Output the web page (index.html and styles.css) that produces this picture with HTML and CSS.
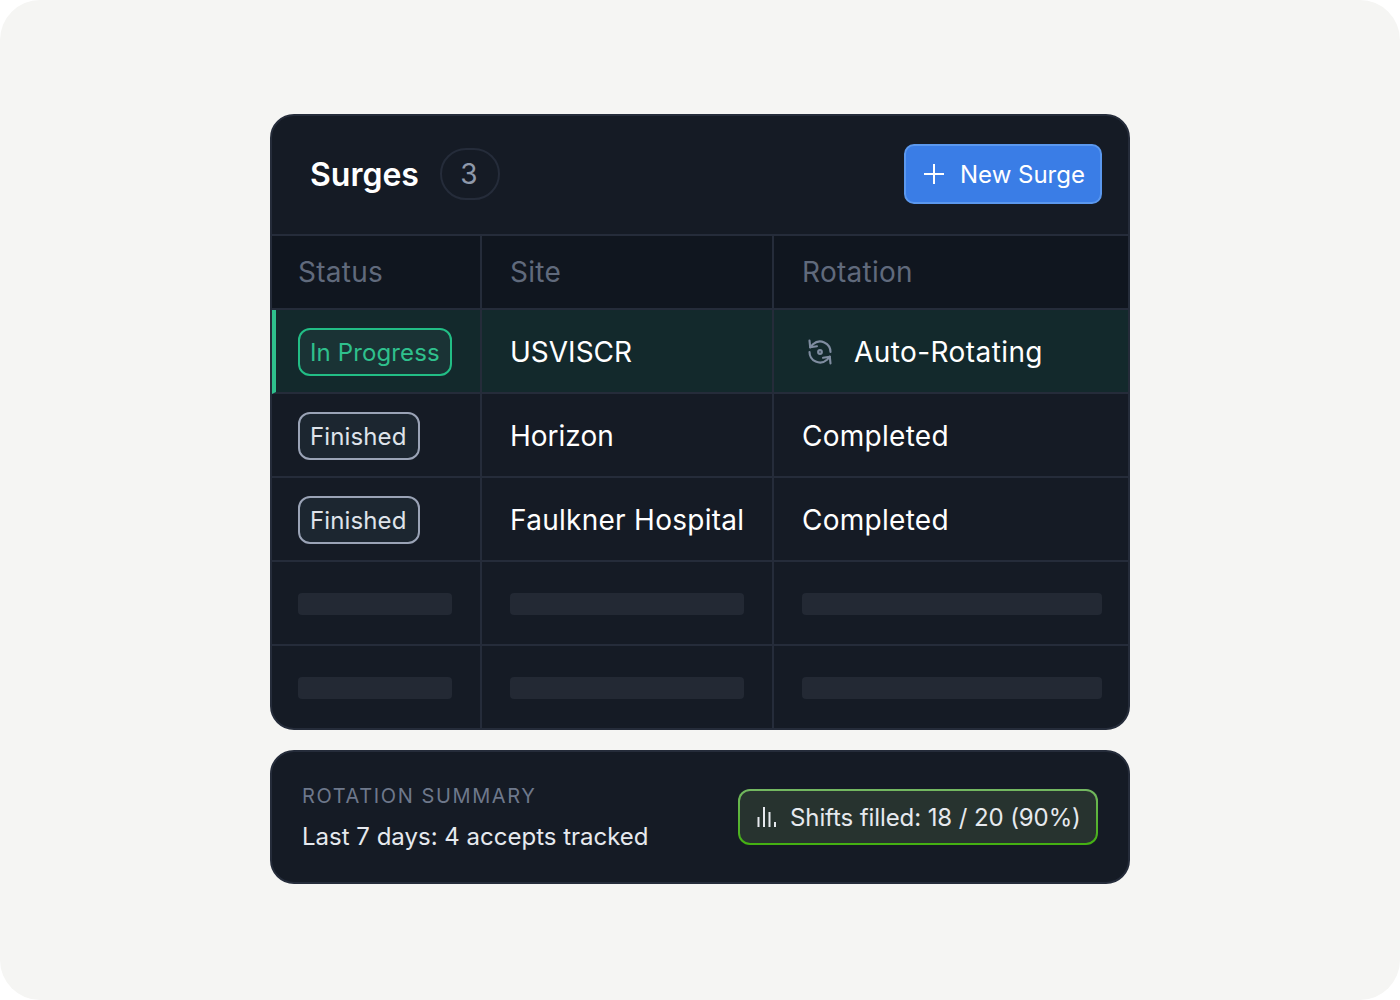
FILE: index.html
```html
<!DOCTYPE html>
<html lang="en">
<head>
<meta charset="utf-8">
<title>Surges</title>
<link rel="stylesheet" href="styles.css">
</head>
<body>
<main class="stage">
  <div class="stack">
    <section class="card table-card">
      <header class="head">
        <div class="head-left">
          <h1 class="title">Surges</h1>
          <span class="count">3</span>
        </div>
        <button class="new-btn" type="button">
          <svg class="plus" viewBox="0 0 20 20" width="20" height="20" aria-hidden="true"><path d="M10 0v20M0 10h20" /></svg>
          New Surge
        </button>
      </header>
      <div class="grid">
        <div class="cell th">Status</div>
        <div class="cell th">Site</div>
        <div class="cell th last">Rotation</div>

        <div class="cell td active first"><span class="pill pill-green">In Progress</span></div>
        <div class="cell td active tight">USVISCR</div>
        <div class="cell td active last rot">
          <svg class="rot-icon" viewBox="0 0 24 24" width="28" height="28" aria-hidden="true">
            <path d="M3 2.2 3.6 8l5.8-.9"/>
            <path d="M21 12A9 9 0 0 0 6 5.3L3.6 8"/>
            <path d="M21 21.8 20.4 16l-5.8.9"/>
            <path d="M3 12a9 9 0 0 0 15 6.7l2.4-2.7"/>
            <circle cx="12" cy="12" r="1.6"/>
          </svg>
          <span>Auto-Rotating</span>
        </div>

        <div class="cell td first"><span class="pill pill-grey">Finished</span></div>
        <div class="cell td tight">Horizon</div>
        <div class="cell td last">Completed</div>

        <div class="cell td first"><span class="pill pill-grey">Finished</span></div>
        <div class="cell td">Faulkner Hospital</div>
        <div class="cell td last">Completed</div>

        <div class="cell td first"><span class="skel"></span></div>
        <div class="cell td"><span class="skel"></span></div>
        <div class="cell td last"><span class="skel"></span></div>

        <div class="cell td first bottom"><span class="skel"></span></div>
        <div class="cell td bottom"><span class="skel"></span></div>
        <div class="cell td last bottom"><span class="skel"></span></div>
      </div>
    </section>

    <section class="card summary">
      <div class="sum-text">
        <div class="sum-label">ROTATION SUMMARY</div>
        <div class="sum-line">Last 7 days: 4 accepts tracked</div>
      </div>
      <div class="shifts">
        <svg class="bars" viewBox="0 0 20 20" width="20" height="20" aria-hidden="true">
          <path d="M1.5 20V10M7 20V0M12.5 20V5M18 20v-5"/>
        </svg>
        <span>Shifts filled: 18 / 20 (90%)</span>
      </div>
    </section>
  </div>
</main>
</body>
</html>
```

FILE: styles.css
```css
* { box-sizing: border-box; }
html, body { margin: 0; padding: 0; background: #ffffff; }
body { font-family: Inter, "Liberation Sans", sans-serif; }

.stage {
  width: 1400px;
  height: 1000px;
  background: #f5f5f3;
  border-radius: 40px;
  display: flex;
  align-items: center;
  justify-content: center;
  overflow: hidden;
}
.stack {
  width: 860px;
  display: flex;
  flex-direction: column;
  gap: 20px;
  margin-top: -2px;
}
.card {
  background: #151b25;
  border: 2px solid #252c3a;
  border-radius: 24px;
  overflow: hidden;
}

.head {
  height: 120px;
  display: flex;
  align-items: center;
  justify-content: space-between;
  padding: 0 26px 2px 38px;
  border-bottom: 2px solid #252c3a;
}
.head-left { display: flex; align-items: center; gap: 21px; }
.title { margin: 0; padding-top: 2px; font-size: 32px; font-weight: 600; color: #ffffff; line-height: 40px; }
.count {
  width: 60px;
  height: 52px;
  border: 2px solid #252c3a;
  border-radius: 26px;
  display: flex;
  align-items: center;
  justify-content: center;
  padding-right: 2px;
  font-size: 28px;
  color: #8f99ab;
}
.new-btn {
  width: 198px;
  height: 60px;
  background: #3a7de6;
  border: 2px solid #5b98ee;
  border-radius: 10px;
  color: #ffffff;
  font: 400 24px Inter, "Liberation Sans", sans-serif;
  display: flex;
  align-items: center;
  gap: 16px;
  padding: 0 0 0 18px;
  white-space: nowrap;
}
.plus { stroke: #ffffff; stroke-width: 2; fill: none; flex: none; }

.grid { display: grid; grid-template-columns: 210px 292px 1fr; }
.cell {
  display: flex;
  align-items: center;
  border-right: 2px solid #252c3a;
  border-bottom: 2px solid #252c3a;
  padding: 2px 28px 0 28px;
  font-size: 28px;
  letter-spacing: 0.01em;
  color: #ffffff;
  height: 84px;
  white-space: nowrap;
}
.tight { letter-spacing: 0; }
.th {
  height: 74px;
  padding-top: 0;
  background: #10161f;
  color: #606a7c;
}
.td:nth-child(3n+1) { padding-left: 26px; }
.th:nth-child(3n+1) { padding-left: 26px; }
.last { border-right: 0; }
.bottom { border-bottom: 0; height: 82px; }
.active { background: #13292c; }
.active.first { border-left: 4px solid #2fc08d; padding-left: 22px; }
.rot { gap: 20px; padding-left: 32px; letter-spacing: 0.015em; }
.rot-icon { fill: none; stroke: #7f8ca0; stroke-width: 1.8; stroke-linecap: round; stroke-linejoin: round; flex: none; }

.pill {
  display: inline-flex;
  align-items: center;
  height: 48px;
  padding: 0 10px;
  border-radius: 12px;
  border: 2px solid;
  font-size: 24px;
  letter-spacing: 0.005em;
}
.pill-green { color: #2fc08d; border-color: #22bd85; background: #1a3335; width: 154px; }
.pill-grey { color: #dfe3ea; border-color: #9aa3b6; background: #1c2630; width: 122px; }

.skel { display: block; width: 100%; height: 22px; border-radius: 4px; background: #232934; }
.td:nth-child(3n+1) .skel { width: 154px; }
.td:nth-child(3n+2) .skel { width: 234px; }
.td:nth-child(3n) .skel { width: 300px; }

.summary {
  height: 134px;
  display: flex;
  align-items: center;
  justify-content: space-between;
  padding: 0 30px;
}
.sum-text { display: flex; flex-direction: column; gap: 10px; padding-top: 2px; }
.sum-label { font-size: 20px; letter-spacing: 0.08em; color: #6e788b; line-height: 28px; }
.sum-line { font-size: 24px; color: #e6e9ee; line-height: 34px; }
.shifts {
  width: 360px;
  height: 56px;
  display: flex;
  align-items: center;
  gap: 13px;
  padding-left: 17px;
  font-size: 24px;
  letter-spacing: -0.1px;
  color: #e6e9ee;
  white-space: nowrap;
  border: 2px solid transparent;
  border-radius: 12px;
  background: linear-gradient(#27332f, #27332f) padding-box, linear-gradient(#74b862, #43b010) border-box;
}
.bars { stroke: #e6e9ee; stroke-width: 2; fill: none; flex: none; }
```
